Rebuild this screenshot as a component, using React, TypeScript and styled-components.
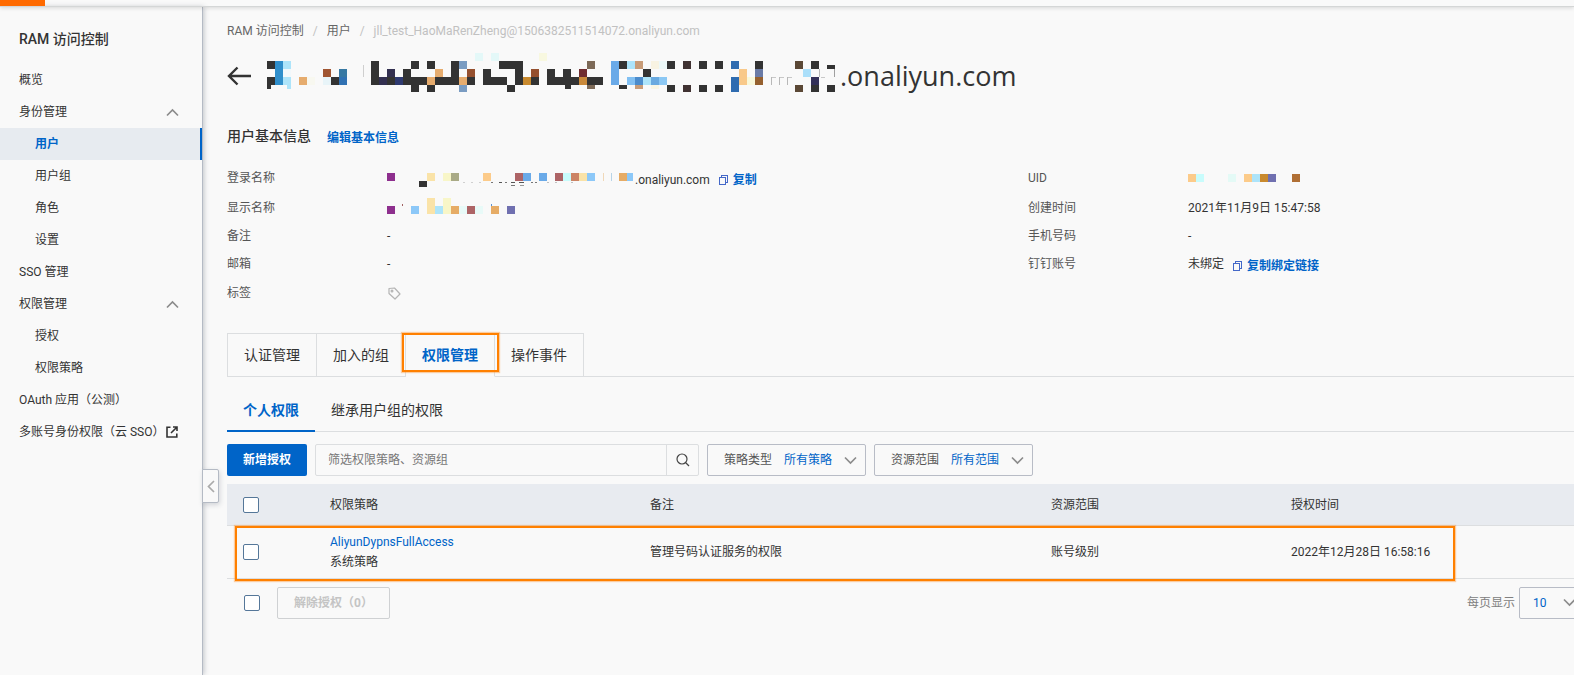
import React from "react";
import styled, { createGlobalStyle, css } from "styled-components";

const GlobalStyle = createGlobalStyle`
  *, *::before, *::after { box-sizing: border-box; }
  body {
    margin: 0;
    background: #f9f9f9;
    color: #333;
    font-family: Roboto, "Noto Sans CJK SC", sans-serif;
    font-size: 12px;
    line-height: 18px;
    overflow-x: hidden;
  }
  button, input, select { font: inherit; color: inherit; margin: 0; }
  a { color: inherit; text-decoration: none; }
`;

const blue = "#0064c8";
const line = "#dcdee0";

const Page = styled.div`
  display: flex;
  flex-direction: column;
  min-height: 100vh;
`;

const TopBar = styled.header`
  position: relative;
  z-index: 2;
  height: 7px;
  border-bottom: 1px solid #d4d6d6;
  box-shadow: 0 1px 4px rgba(0, 0, 0, 0.14);
`;

const BrandStrip = styled.div`
  width: 45px;
  height: 6px;
  background: #ff6a00;
`;

const Body = styled.div`
  flex: 1;
  display: flex;
`;

const Sidebar = styled.nav`
  position: relative;
  flex: 0 0 203px;
  border-right: 1px solid #b4bac4;
  box-shadow: 1px 0 5px rgba(60, 70, 90, 0.3);
`;

const SidebarTitle = styled.h2`
  margin: 0;
  padding: 20px 19px 13px;
  font-size: 14px;
  line-height: 24px;
  font-weight: 500;
`;

const NavList = styled.ul`
  list-style: none;
  margin: 0;
  padding: 0;
`;

const navRow = css`
  display: flex;
  align-items: center;
  width: 100%;
  height: 32px;
  line-height: 32px;
  white-space: nowrap;
`;

const NavLink = styled.a<{ $nested?: boolean; $active?: boolean }>`
  ${navRow}
  gap: 2px;
  padding-left: ${(p) => (p.$nested ? 35 : 19)}px;
  ${(p) =>
    p.$active &&
    css`
      color: ${blue};
      font-weight: 700;
      background: #e7ebf0;
      border-right: 2px solid ${blue};
    `}
`;

const NavGroup = styled.button`
  ${navRow}
  justify-content: space-between;
  padding: 0 23px 0 19px;
  border: 0;
  background: none;
`;

const CollapseHandle = styled.button`
  position: absolute;
  left: 100%;
  top: 462px;
  display: flex;
  align-items: center;
  justify-content: center;
  width: 17px;
  height: 34px;
  padding: 0;
  background: #f9f9f9;
  border: 1px solid #b4bac4;
  border-radius: 0 2px 2px 0;
  box-shadow: 1px 2px 5px rgba(60, 70, 90, 0.2);
`;

const Main = styled.main`
  flex: 1;
  min-width: 0;
  padding: 15px 0 40px 24px;
  overflow: hidden;
`;

const Breadcrumb = styled.nav`
  display: flex;
  gap: 9px;
  color: #666;
  white-space: nowrap;
`;

const Muted = styled.span`
  color: #c1c1c1;
`;

const TitleRow = styled.div`
  display: flex;
  align-items: center;
  gap: 16px;
  height: 40px;
  margin-top: 16px;
`;

const IconButton = styled.button`
  display: flex;
  padding: 0;
  border: 0;
  background: none;
`;

const Title = styled.h1`
  display: flex;
  align-items: center;
  gap: 4px;
  margin: 0;
  font-family: "Open Sans", "Noto Sans CJK SC", sans-serif;
  font-size: 27px;
  line-height: 40px;
  font-weight: 500;
`;

const SectionHead = styled.div`
  display: flex;
  align-items: center;
  gap: 16px;
  margin-top: 28px;
`;

const SectionTitle = styled.h3`
  margin: 0;
  font-size: 14px;
  line-height: 24px;
  font-weight: 500;
`;

const ActionLink = styled.a`
  display: inline-flex;
  align-items: center;
  gap: 5px;
  color: ${blue};
  font-weight: 700;
  padding-top: 4px;
`;

const InfoGrid = styled.div`
  display: grid;
  grid-template-columns: 22fr 15fr;
  margin-top: 15px;
`;

const InfoList = styled.dl`
  display: grid;
  grid-template-columns: 160px 1fr;
  grid-template-rows: 30px 29px 28px 28px 30px;
  align-items: center;
  margin: 0;
`;

const InfoLabel = styled.dt`
  color: #555;
`;

const InfoValue = styled.dd`
  display: flex;
  align-items: center;
  gap: 9px;
  margin: 0;
`;

const Masked = styled.span`
  display: inline-flex;
  align-items: center;
  gap: 2px;
`;

const MaskedTail = styled.span`
  padding-top: 4px;
`;

const Tabs = styled.div`
  display: flex;
  height: 44px;
  margin-top: 25px;
  border-bottom: 1px solid ${line};
`;

const Tab = styled.button<{ $active?: boolean }>`
  position: relative;
  height: 44px;
  padding: 0 16px;
  font-size: 14px;
  background: #f9f9f9;
  border: 1px solid ${line};
  border-left-width: 0;
  &:first-child { border-left-width: 1px; }
  ${(p) =>
    p.$active &&
    css`
      z-index: 1;
      color: ${blue};
      font-weight: 700;
      border-top-color: #8a6560;
      border-bottom-color: #f9f9f9;
    `}
`;

const highlight = css`
  position: absolute;
  border: 2px solid #ff8000;
  box-shadow: 0 0 1px 1px rgba(255, 140, 30, 0.4);
  pointer-events: none;
`;

const TabHighlight = styled.span`
  ${highlight}
  inset: -1px -5px 4px -4px;
`;

const SubTabs = styled.div`
  display: flex;
  height: 44px;
  margin-top: 11px;
  border-bottom: 1px solid ${line};
`;

const SubTab = styled.button<{ $active?: boolean }>`
  height: 44px;
  padding: 2px 16px 0;
  font-size: 14px;
  background: none;
  border: 0;
  border-bottom: 2px solid ${(p) => (p.$active ? blue : "transparent")};
  color: ${(p) => (p.$active ? blue : "inherit")};
  font-weight: ${(p) => (p.$active ? 700 : 400)};
`;

const Toolbar = styled.div`
  display: flex;
  gap: 8px;
  height: 32px;
  margin-top: 12px;
`;

const PrimaryButton = styled.button`
  width: 80px;
  padding: 0;
  border: 0;
  border-radius: 2px;
  background: ${blue};
  color: #fff;
  font-weight: 700;
`;

const Search = styled.form`
  display: flex;
  flex: 0 1 384px;
  border: 1px solid ${line};
  border-radius: 2px;
`;

const SearchInput = styled.input`
  flex: 1;
  min-width: 0;
  padding: 0 12px;
  border: 0;
  background: none;
  outline: 0;
  &::placeholder { color: #777; opacity: 1; }
`;

const SearchButton = styled.button`
  display: flex;
  align-items: center;
  justify-content: center;
  width: 32px;
  padding: 0;
  border: 0;
  border-left: 1px solid ${line};
  background: none;
`;

const Filter = styled.label`
  display: flex;
  align-items: center;
  gap: 12px;
  width: 159px;
  padding: 0 8px 0 16px;
  border: 1px solid #b8bcc6;
  border-radius: 2px;
  color: #555;
`;

const FilterSelect = styled.select`
  flex: 1;
  min-width: 0;
  padding: 0;
  border: 0;
  appearance: none;
  background: none;
  color: ${blue};
`;

const TableArea = styled.div`
  position: relative;
  margin-top: 8px;
`;

const Table = styled.table`
  width: 100%;
  table-layout: fixed;
  border-collapse: collapse;
`;

const HeadRow = styled.tr`
  height: 41px;
  background: #e8ebf0;
`;

const BodyRow = styled.tr`
  height: 53px;
`;

const cell = css`
  padding: 1px 16px 0;
  border-bottom: 1px solid ${line};
  text-align: left;
  font-weight: 400;
  vertical-align: middle;
`;

const Th = styled.th`${cell}`;
const Td = styled.td`${cell}`;

const Policy = styled.div`
  display: flex;
  flex-direction: column;
  line-height: 20px;
`;

const PolicyLink = styled.a`
  color: ${blue};
`;

const RowHighlight = styled.span`
  ${highlight}
  left: 8px;
  right: 119px;
  bottom: -2px;
  height: 55px;
`;

const Check = styled.input.attrs({ type: "checkbox" })`
  display: block;
  appearance: none;
  width: 16px;
  height: 16px;
  border: 1px solid #557799;
  border-radius: 2px;
  background: #fff;
`;

const Footer = styled.div`
  display: flex;
  justify-content: space-between;
  align-items: center;
  margin: 8px -16px 0 17px;
`;

const FooterGroup = styled.div<{ $gap: number }>`
  display: flex;
  align-items: center;
  gap: ${(p) => p.$gap}px;
`;

const RevokeButton = styled.button`
  width: 113px;
  height: 32px;
  padding: 0 16px;
  text-align: left;
  border: 1px solid #cfd1d3;
  border-radius: 2px;
  background: none;
  color: #c4c4c4;
  font-weight: 700;
`;

const PageSizeLabel = styled.label`
  color: #808080;
`;

const PageSize = styled.span`
  display: flex;
  align-items: center;
  width: 71px;
  height: 32px;
  padding: 0 13px;
  border: 1px solid #b8bcc6;
  border-radius: 2px;
`;

type Run = [col: number, span: number, color: string];

interface MosaicProps {
  width: number;
  rows: { y: number; h: number; runs: Run[] }[];
  height: number;
}

const D = "#333333";

function Mosaic({ width, height, rows }: MosaicProps) {
  return (
    <svg width={width} height={height} shapeRendering="crispEdges" aria-hidden="true">
      {rows.map((r) =>
        r.runs.map(([col, span, color]) => (
          <rect key={`${r.y}-${col}`} x={col * 8} y={r.y} width={span * 8} height={r.h} fill={color} />
        ))
      )}
    </svg>
  );
}

const titleRows: MosaicProps["rows"] = [
  { y: 0, h: 8, runs: [[26, 1, "#e4f8f8"], [28, 1, "#e4f8f8"], [34, 1, "#f8f8e0"]] },
  {
    y: 8, h: 8,
    runs: [
      [0, 1, D], [1, 1, "#2f8ecb"], [2, 1, "#ade4fa"], [13, 1, D], [18, 1, D], [20, 1, D], [23, 1, D],
      [24, 1, "#7a9cc2"], [29, 3, D], [40, 1, "#7d6a58"], [43, 1, "#6aaae8"], [44, 1, D], [45, 1, "#ade4fa"],
      [46, 1, "#c89c78"], [48, 1, "#f8f3e2"], [49, 1, "#ecf8f8"], [50, 1, D], [52, 1, "#403232"], [54, 1, D],
      [56, 1, D], [58, 1, "#2f6cb0"], [61, 1, D], [66, 1, "#5b4836"], [68, 1, D],
    ],
  },
  { y: 12, h: 4, runs: [[12, 0.125, "#cfcfcf"], [70, 1, D]] },
  {
    y: 16, h: 8,
    runs: [
      [1, 1, "#2f8ecb"], [2, 1, "#f2f8fb"], [7, 1, "#a05532"], [9, 1, "#3779a3"], [12, 0.125, "#cfcfcf"],
      [13, 1, D], [15, 1, "#333050"], [17, 1, D], [21, 1, "#e6ac6e"], [23, 1, D], [25, 1, "#95502f"], [27, 1, D],
      [31, 1, D], [33, 1, "#95502f"], [35, 1, D], [37, 1, D], [39, 1, "#702d30"], [43, 1, "#6aaae8"], [47, 1, D],
      [59, 1, "#f9c98a"], [61, 1, "#6a7ba6"], [67, 1, "#abdffa"], [69, 0.125, "#b8b8b8"], [70.875, 0.125, "#a0a0a0"],
    ],
  },
  {
    y: 24, h: 8,
    runs: [
      [0, 1, D], [1, 1, "#2f8ecb"], [2, 1, "#ade4fa"], [4, 1, "#e6ac6e"], [5, 1, "#f8f8f0"], [7, 1, "#e8f4f8"],
      [8, 1, D], [9, 1, "#3172b3"], [13, 1, D], [14, 1, "#333050"], [15, 1, D], [16, 1, "#2f3a70"], [17, 3, D],
      [20, 1, "#e6ac6e"], [21, 2, D], [23, 1, D], [24, 1, "#e6ac6e"], [25, 1, D], [27, 3, D], [31, 1, D],
      [32, 1, "#c98a2e"], [33, 1, D], [35, 4, D], [39, 1, "#c9893a"], [40, 2, D], [43, 1, "#6aaae8"],
      [45, 1, "#82c0f2"], [46, 1, "#4c8ccc"], [47, 1, "#ade4fa"], [48, 1, "#6aaae0"], [49, 1, "#8cc8f4"],
      [58, 1, "#2f6cb0"], [59, 1, "#f9c98a"], [60, 1, "#f9f8da"], [61, 1, "#95602f"], [63, 0.125, "#b8b8b8"],
      [64, 0.125, "#b8b8b8"], [65, 0.125, "#b8b8b8"], [68, 1, "#333058"],
    ],
  },
  { y: 24, h: 1, runs: [[63.1, 0.5, "#c8c8c8"], [64.1, 0.5, "#c8c8c8"], [65.1, 0.5, "#c8c8c8"], [69.2, 0.5, "#c8c8c8"]] },
  {
    y: 32, h: 4,
    runs: [
      [0, 0.5, D], [2.5, 0.5, "#ade4fa"], [37.2, 0.8, D], [40, 1, "#7d6a58"], [44, 1, D], [46, 1, "#c89c78"],
      [48, 1, "#f8f6e4"],
    ],
  },
  {
    y: 32, h: 7,
    runs: [
      [18, 1, D], [20, 1, D], [24, 1, "#7a9cc2"], [30, 1, D], [50, 1, D], [52, 1, "#403232"], [54, 1, D],
      [56, 1, D], [58, 1, "#2f6cb0"], [66, 1, "#5b4836"], [68, 1, D], [70, 1, D],
    ],
  },
];

const loginRows: MosaicProps["rows"] = [
  {
    y: 5, h: 8,
    runs: [
      [0, 1, "#8e2f8e"], [5, 1, "#fae3a8"], [7, 1, "#f8f6c8"], [8, 1, "#a9aa86"], [12, 1, "#fccb8a"],
      [16, 1, "#ad6466"], [17, 1, "#6aaae8"], [19, 1, "#6aaae8"], [21, 1, "#ad6466"], [22, 1, "#c8fcfc"],
      [23, 1, "#cc8465"], [24, 1, "#fae3a8"], [25, 1, "#8cc8f8"], [27, 0.125, "#f0d8b8"], [28, 0.125, "#b8d4e8"],
      [29, 1, "#e6ac66"], [30, 0.75, "#8cc8f8"],
    ],
  },
  { y: 13, h: 6, runs: [[4, 1, D]] },
  {
    y: 14, h: 1,
    runs: [
      [9.5, 0.25, "#d0d0d0"], [10.5, 0.25, "#d0d0d0"], [11.5, 0.25, "#d0d0d0"], [13, 0.25, "#777"],
      [14, 0.375, "#555"], [14.75, 0.25, "#777"], [15.5, 0.5, "#555"], [16.5, 0.625, "#555"], [18, 0.25, "#777"],
      [18.5, 0.25, "#777"], [20, 0.25, "#c0c0c0"], [21, 0.25, "#c0c0c0"], [23, 0.25, "#c0c0c0"],
    ],
  },
  { y: 17, h: 1, runs: [[15.5, 0.5, "#777"], [16.625, 0.5, "#999"]] },
];

const displayRows: MosaicProps["rows"] = [
  { y: 0, h: 8, runs: [[5, 1, "#fae3a8"], [7, 1, "#f8f6c8"]] },
  {
    y: 8, h: 8,
    runs: [
      [0, 1, "#8e2f8e"], [3, 1, "#8cc8f8"], [5, 1, "#fae3a8"], [6, 1, "#ade4fa"], [7, 1, "#f8f6c8"],
      [8, 1, "#e6ac66"], [9, 1, "#e8faf8"], [10, 1, "#ad6466"], [11, 1, "#e8faf8"], [13, 1, "#e6ac66"],
      [15, 1, "#7070b0"],
    ],
  },
  { y: 6, h: 2, runs: [[1.875, 0.125, "#a06060"], [13, 0.125, "#5a90d0"]] },
];

const uidRows: MosaicProps["rows"] = [
  {
    y: 0, h: 8,
    runs: [
      [0, 1, "#fccb8a"], [1, 1, "#c8fcfc"], [5, 1, "#e4faf6"], [7, 1, "#fccb8a"], [8, 1, "#ade4fa"],
      [9, 1, "#c98a2e"], [10, 1, "#7070b0"], [13, 1, "#b06f35"],
    ],
  },
];

const chevrons = { up: "M1 7.500L6.500 2L12 7.500", down: "M1 1.500L6.500 7L12 1.500" };

function Chevron({ dir }: { dir: "up" | "down" }) {
  return (
    <svg width="13" height="9" viewBox="0 0 13 9" fill="none" stroke="#8c8c8c" strokeWidth="1.700" style={{ flexShrink: 0 }}>
      <path d={chevrons[dir]} />
    </svg>
  );
}

function CopyIcon() {
  return (
    <svg width="9" height="10" viewBox="0 0 9 10" fill="none" stroke="#4468c8" strokeWidth="1" shapeRendering="crispEdges">
      <path d="M2.500 2.500V.5H8.500V7.500H6.500M.5 2.500H6.500V9.500H.5Z" />
    </svg>
  );
}

function ExternalIcon() {
  return (
    <svg width="12" height="12" viewBox="0 0 12 12" fill="none" stroke="#333" strokeWidth="1.600">
      <path d="M4.500 1.200H1V11H10.800V7.500M7 1H11V5M10.800 1.200L5 7" />
    </svg>
  );
}

function TagIcon() {
  return (
    <svg width="14" height="13" viewBox="-1 0 14 13" fill="none" stroke="#b4b4b4" strokeWidth="1.200">
      <path d="M1 1.500L6.500 1L12 7L7 12L1 6.500Z" strokeLinejoin="round" />
      <circle cx="4" cy="4" r="0.900" />
    </svg>
  );
}

interface NavItem {
  text: string;
  nested?: boolean;
  group?: boolean;
  active?: boolean;
  external?: boolean;
}

const navItems: NavItem[] = [
  { text: "概览" },
  { text: "身份管理", group: true },
  { text: "用户", nested: true, active: true },
  { text: "用户组", nested: true },
  { text: "角色", nested: true },
  { text: "设置", nested: true },
  { text: "SSO 管理" },
  { text: "权限管理", group: true },
  { text: "授权", nested: true },
  { text: "权限策略", nested: true },
  { text: "OAuth 应用（公测）" },
  { text: "多账号身份权限（云 SSO）", external: true },
];

export default function App() {
  return (
    <Page>
      <GlobalStyle />
      <TopBar>
        <BrandStrip />
      </TopBar>
      <Body>
        <Sidebar aria-label="RAM">
          <SidebarTitle>RAM 访问控制</SidebarTitle>
          <NavList>
            {navItems.map((item) => (
              <li key={item.text}>
                {item.group ? (
                  <NavGroup type="button" aria-expanded="true">
                    {item.text}
                    <Chevron dir="up" />
                  </NavGroup>
                ) : (
                  <NavLink href="#" $nested={item.nested} $active={item.active}>
                    {item.text}
                    {item.external && <ExternalIcon />}
                  </NavLink>
                )}
              </li>
            ))}
          </NavList>
          <CollapseHandle type="button" aria-label="收起">
            <svg width="8" height="13" viewBox="0 0 8 13" fill="none" stroke="#aaa" strokeWidth="1.700">
              <path d="M7 1L1.500 6.500L7 12" />
            </svg>
          </CollapseHandle>
        </Sidebar>

        <Main>
          <Breadcrumb aria-label="breadcrumb">
            <a href="#">RAM 访问控制</a>
            <Muted>/</Muted>
            <a href="#">用户</a>
            <Muted>/</Muted>
            <Muted>jll_test_HaoMaRenZheng@1506382511514072.onaliyun.com</Muted>
          </Breadcrumb>

          <TitleRow>
            <IconButton type="button" aria-label="返回">
              <svg width="24" height="20" viewBox="0 0 24 20" fill="none" stroke="#333" strokeWidth="2.400">
                <path d="M24 10H2M10.500 1.500L2 10L10.500 18.500" />
              </svg>
            </IconButton>
            <Title>
              <Mosaic width={569} height={46} rows={titleRows} />
              .onaliyun.com
            </Title>
          </TitleRow>

          <SectionHead>
            <SectionTitle>用户基本信息</SectionTitle>
            <ActionLink href="#">编辑基本信息</ActionLink>
          </SectionHead>

          <InfoGrid>
            <InfoList>
              <InfoLabel>登录名称</InfoLabel>
              <InfoValue>
                <Masked>
                  <Mosaic width={246} height={20} rows={loginRows} />
                  <MaskedTail>.onaliyun.com</MaskedTail>
                </Masked>
                <ActionLink href="#">
                  <CopyIcon />
                  复制
                </ActionLink>
              </InfoValue>
              <InfoLabel>显示名称</InfoLabel>
              <InfoValue>
                <Mosaic width={128} height={20} rows={displayRows} />
              </InfoValue>
              <InfoLabel>备注</InfoLabel>
              <InfoValue>-</InfoValue>
              <InfoLabel>邮箱</InfoLabel>
              <InfoValue>-</InfoValue>
              <InfoLabel>标签</InfoLabel>
              <InfoValue>
                <IconButton type="button" aria-label="编辑标签">
                  <TagIcon />
                </IconButton>
              </InfoValue>
            </InfoList>
            <InfoList>
              <InfoLabel>UID</InfoLabel>
              <InfoValue>
                <Mosaic width={112} height={8} rows={uidRows} />
              </InfoValue>
              <InfoLabel>创建时间</InfoLabel>
              <InfoValue>2021年11月9日 15:47:58</InfoValue>
              <InfoLabel>手机号码</InfoLabel>
              <InfoValue>-</InfoValue>
              <InfoLabel>钉钉账号</InfoLabel>
              <InfoValue>
                未绑定
                <ActionLink href="#">
                  <CopyIcon />
                  复制绑定链接
                </ActionLink>
              </InfoValue>
            </InfoList>
          </InfoGrid>

          <Tabs role="tablist">
            <Tab role="tab">认证管理</Tab>
            <Tab role="tab">加入的组</Tab>
            <Tab role="tab" aria-selected="true" $active>
              权限管理
              <TabHighlight />
            </Tab>
            <Tab role="tab">操作事件</Tab>
          </Tabs>

          <SubTabs role="tablist">
            <SubTab role="tab" aria-selected="true" $active>个人权限</SubTab>
            <SubTab role="tab">继承用户组的权限</SubTab>
          </SubTabs>

          <Toolbar>
            <PrimaryButton type="button">新增授权</PrimaryButton>
            <Search onSubmit={(e) => e.preventDefault()}>
              <SearchInput type="text" aria-label="筛选" placeholder="筛选权限策略、资源组" />
              <SearchButton type="submit" aria-label="搜索">
                <svg width="14" height="14" viewBox="0 0 14 14" fill="none" stroke="#444" strokeWidth="1.200">
                  <circle cx="6" cy="6" r="5" />
                  <path d="M9.500 9.500L13 13" />
                </svg>
              </SearchButton>
            </Search>
            <Filter>
              策略类型
              <FilterSelect defaultValue="all">
                <option value="all">所有策略</option>
              </FilterSelect>
              <Chevron dir="down" />
            </Filter>
            <Filter>
              资源范围
              <FilterSelect defaultValue="all">
                <option value="all">所有范围</option>
              </FilterSelect>
              <Chevron dir="down" />
            </Filter>
          </Toolbar>

          <TableArea>
            <Table>
              <colgroup>
                <col width="87" />
                <col width="320" />
                <col width="401" />
                <col width="240" />
                <col />
              </colgroup>
              <thead>
                <HeadRow>
                  <Th><Check aria-label="全选" /></Th>
                  <Th>权限策略</Th>
                  <Th>备注</Th>
                  <Th>资源范围</Th>
                  <Th>授权时间</Th>
                </HeadRow>
              </thead>
              <tbody>
                <BodyRow>
                  <Td><Check aria-label="AliyunDypnsFullAccess" /></Td>
                  <Td>
                    <Policy>
                      <PolicyLink href="#">AliyunDypnsFullAccess</PolicyLink>
                      <span>系统策略</span>
                    </Policy>
                  </Td>
                  <Td>管理号码认证服务的权限</Td>
                  <Td>账号级别</Td>
                  <Td>2022年12月28日 16:58:16</Td>
                </BodyRow>
              </tbody>
            </Table>
            <RowHighlight />
          </TableArea>

          <Footer>
            <FooterGroup $gap={17}>
              <Check aria-label="选择全部" />
              <RevokeButton type="button" disabled>解除授权（0）</RevokeButton>
            </FooterGroup>
            <FooterGroup $gap={4}>
              <PageSizeLabel htmlFor="page-size">每页显示</PageSizeLabel>
              <PageSize>
                <FilterSelect id="page-size" defaultValue="10">
                  <option value="10">10</option>
                </FilterSelect>
                <Chevron dir="down" />
              </PageSize>
            </FooterGroup>
          </Footer>
        </Main>
      </Body>
    </Page>
  );
}
